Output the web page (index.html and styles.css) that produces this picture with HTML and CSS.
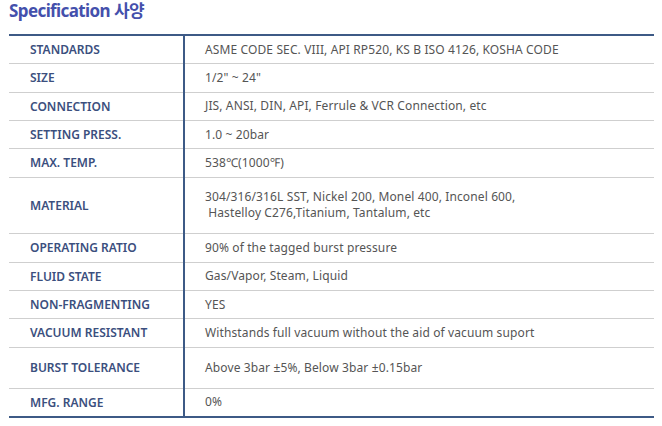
FILE: index.html
```html
<!DOCTYPE html>
<html lang="ko">
<head>
<meta charset="utf-8">
<link rel="stylesheet" href="styles.css">
</head>
<body>
<h2 class="title">Specification 사양</h2>
<table class="spec">
  <tr class="r"><th>STANDARDS</th><td>ASME CODE SEC. VIII, API RP520, KS B ISO 4126, KOSHA CODE</td></tr>
  <tr class="r"><th>SIZE</th><td>1/2" ~ 24"</td></tr>
  <tr class="r"><th>CONNECTION</th><td>JIS, ANSI, DIN, API, Ferrule &amp; VCR Connection, etc</td></tr>
  <tr class="r"><th>SETTING PRESS.</th><td>1.0 ~ 20bar</td></tr>
  <tr class="r"><th>MAX. TEMP.</th><td>538℃(1000℉)</td></tr>
  <tr class="r2"><th>MATERIAL</th><td>304/316/316L SST, Nickel 200, Monel 400, Inconel 600,<br>&nbsp;Hastelloy C276,Titanium, Tantalum, etc</td></tr>
  <tr class="r"><th>OPERATING RATIO</th><td>90% of the tagged burst pressure</td></tr>
  <tr class="r"><th>FLUID STATE</th><td>Gas/Vapor, Steam, Liquid</td></tr>
  <tr class="r"><th>NON-FRAGMENTING</th><td>YES</td></tr>
  <tr class="r"><th>VACUUM RESISTANT</th><td>Withstands full vacuum without the aid of vacuum suport</td></tr>
  <tr class="r3"><th>BURST TOLERANCE</th><td>Above 3bar ±5%, Below 3bar ±0.15bar</td></tr>
  <tr class="r last"><th>MFG. RANGE</th><td>0%</td></tr>
</table>
</body>
</html>
```
FILE: styles.css
```css
html, body {
  margin: 0;
  padding: 0;
  background: #ffffff;
}
body {
  padding: 0 8px 0 9px;
  font-family: "Noto Sans", "Noto Sans CJK KR", sans-serif;
}
.title {
  margin: 0;
  height: 34px;
  font-family: "Noto Sans", "Noto Sans CJK KR", sans-serif;
  font-size: 17px;
  font-weight: 700;
  line-height: 22px;
  color: #4450ac;
  letter-spacing: -0.6px;
}
.spec {
  width: 645px;
  border-collapse: collapse;
  border-top: 2px solid #3d5a86;
  border-bottom: 2px solid #3d5a86;
  font-size: 12px;
}
.spec th,
.spec td {
  padding: 0;
  vertical-align: middle;
  border-bottom: 1px solid #cfcfcf;
}
.spec th {
  width: 153px;
  padding-left: 21px;
  text-align: left;
  font-weight: 600;
  color: #3b4f7e;
  border-right: 2px solid #3d5a86;
}
.spec td {
  padding-left: 20px;
  color: #555555;
  line-height: 16px;
  letter-spacing: 0.12px;
}
.r th, .r td { height: 27.33px; }
.r2 th, .r2 td { height: 55.7px; }
.r3 th, .r3 td { height: 40px; }
.last th, .last td { border-bottom: none; }
```
